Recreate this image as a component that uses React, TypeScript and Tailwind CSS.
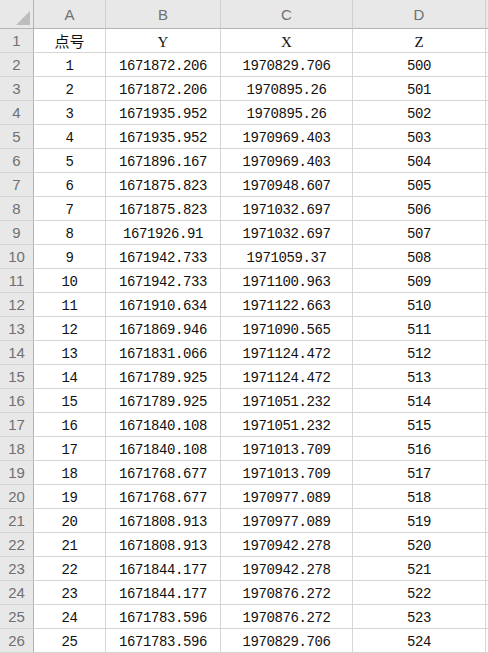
import React from "react";

const rows: [string, string, string, string][] = [
  ["1", "1671872.206", "1970829.706", "500"],
  ["2", "1671872.206", "1970895.26", "501"],
  ["3", "1671935.952", "1970895.26", "502"],
  ["4", "1671935.952", "1970969.403", "503"],
  ["5", "1671896.167", "1970969.403", "504"],
  ["6", "1671875.823", "1970948.607", "505"],
  ["7", "1671875.823", "1971032.697", "506"],
  ["8", "1671926.91", "1971032.697", "507"],
  ["9", "1671942.733", "1971059.37", "508"],
  ["10", "1671942.733", "1971100.963", "509"],
  ["11", "1671910.634", "1971122.663", "510"],
  ["12", "1671869.946", "1971090.565", "511"],
  ["13", "1671831.066", "1971124.472", "512"],
  ["14", "1671789.925", "1971124.472", "513"],
  ["15", "1671789.925", "1971051.232", "514"],
  ["16", "1671840.108", "1971051.232", "515"],
  ["17", "1671840.108", "1971013.709", "516"],
  ["18", "1671768.677", "1971013.709", "517"],
  ["19", "1671768.677", "1970977.089", "518"],
  ["20", "1671808.913", "1970977.089", "519"],
  ["21", "1671808.913", "1970942.278", "520"],
  ["22", "1671844.177", "1970942.278", "521"],
  ["23", "1671844.177", "1970876.272", "522"],
  ["24", "1671783.596", "1970876.272", "523"],
  ["25", "1671783.596", "1970829.706", "524"],
];

const head =
  "h-[29px] bg-[#e8e8e8] border-r border-b border-r-[#d0d0d0] border-b-[#b4b4b4] flex items-center justify-center text-[#707070] text-[15px] [font-family:'Liberation_Sans','Noto_Sans',sans-serif] pt-[2px]";
const rowNum =
  "h-[24px] bg-[#e8e8e8] border-r border-b border-r-[#b4b4b4] border-b-[#d6d6d6] flex items-center justify-center text-[#707070] text-[15px] [font-family:'Liberation_Sans','Noto_Sans',sans-serif] pt-[1px]";
const base =
  "h-[24px] border-r border-b border-[#d6d6d6] bg-white flex items-center justify-center text-[#111]";
const cell =
  base + " text-[14px] tracking-[-0.4px] [font-family:'Liberation_Mono','Noto_Sans_CJK_SC',monospace] pt-[3px]";
const serif =
  base + " text-[15px] [font-family:'Liberation_Serif',serif] pt-[3px]";

export default function App() {
  return (
    <div className="w-[488px] h-[653px] overflow-hidden bg-white">
      <div className="grid grid-cols-[34px_72px_115px_132px_133px_2px]">
        <div className="h-[29px] bg-[#e8e8e8] border-r border-b border-r-[#b4b4b4] border-b-[#b4b4b4] relative">
          <svg className="absolute right-[3px] bottom-[3px]" width="14" height="14" viewBox="0 0 14 14">
            <polygon points="14,0 14,14 0,14" fill="#bdbdbd" />
          </svg>
        </div>
        <div className={head}>A</div>
        <div className={head}>B</div>
        <div className={head}>C</div>
        <div className={head}>D</div>
        <div className="h-[29px] bg-[#e8e8e8] border-b border-b-[#b4b4b4]" />

        <div className={rowNum}>1</div>
        <div className={base + " text-[15px] [font-family:'Noto_Sans_CJK_SC',sans-serif] pt-[1px]"}>点号</div>
        <div className={serif}>Y</div>
        <div className={serif}>X</div>
        <div className={serif}>Z</div>
        <div className="h-[24px] border-b border-[#d6d6d6]" />

        {rows.map((r, i) => (
          <React.Fragment key={i}>
            <div className={rowNum}>{i + 2}</div>
            <div className={cell}>{r[0]}</div>
            <div className={cell}>{r[1]}</div>
            <div className={cell}>{r[2]}</div>
            <div className={cell}>{r[3]}</div>
            <div className="h-[24px] border-b border-[#d6d6d6]" />
          </React.Fragment>
        ))}
      </div>
    </div>
  );
}
